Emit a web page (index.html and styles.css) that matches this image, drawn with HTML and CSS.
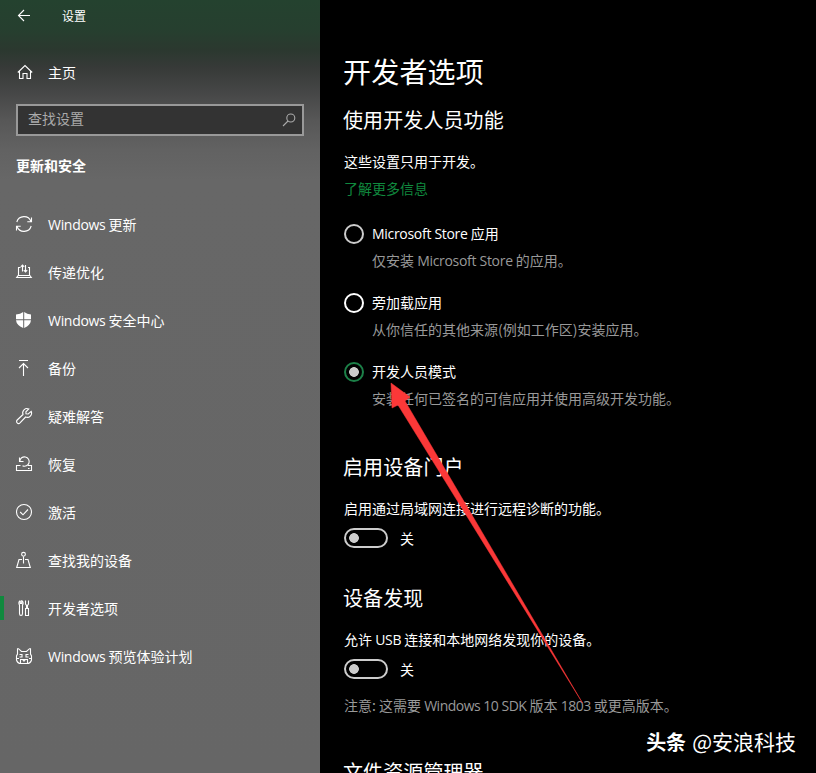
FILE: index.html
```html
<!DOCTYPE html>
<html lang="zh-CN">
<head>
    <meta charset="UTF-8">
    <meta name="viewport" content="width=device-width, initial-scale=1.0">
    <title>设置</title>
    <link rel="stylesheet" href="styles.css">
</head>
<body>
    <aside class="sidebar">
        <header class="titlebar">
            <svg class="icon" viewBox="0 0 16 16"><path d="M14 7.500H2.500M8 2 2.500 7.500 8 13"/></svg>
            <span>设置</span>
        </header>

        <a class="home">
            <svg class="icon" viewBox="0 0 16 16"><path d="M.8 8.500 8 1.500 15.200 8.500M2.500 7.500V14.500H6V9.500H10V14.500H13.500V7.500"/></svg>
            <span>主页</span>
        </a>

        <div class="search">
            <span>查找设置</span>
            <svg class="icon" viewBox="0 0 16 16"><circle cx="9.800" cy="6" r="4"/><path d="M7 9 2 14"/></svg>
        </div>

        <h2 class="group">更新和安全</h2>

        <nav class="nav">
            <a class="item">
                <svg class="icon" viewBox="0 0 16 16"><path d="M.8 6A7.500 7.500 0 0 1 15 5.500M15.500 1.500V5.700H11.300M15.200 10A7.500 7.500 0 0 1 1 10.500M.5 14.500V10.300H4.700"/></svg>
                <span><span class="latin">Windows</span> 更新</span>
            </a>
            <a class="item">
                <svg class="icon" viewBox="0 0 16 16"><path d="M4.500 3.500H2.500V11L.7 13.500H15.300L13.500 11V3.500H12M2.500 11.500H13.500M6.500 7.500V1M4.800 2.800 6.500 1 8.200 2.800M9.500 1V8M7.800 6.200 9.500 8 11.200 6.200"/></svg>
                <span>传递优化</span>
            </a>
            <a class="item">
                <svg class="icon" viewBox="0 0 16 16"><path class="solid" d="M7.200 0V7.200H0V2.500Q4.500 2.300 7.200 0M8.200 0Q11 2.300 15 2.500V7.200H8.200M0 8.200H7.200V16Q.5 13 0 8.200M8.200 8.200H15Q14.500 13 8.200 16"/></svg>
                <span><span class="latin">Windows</span> 安全中心</span>
            </a>
            <a class="item">
                <svg class="icon" viewBox="0 0 16 16"><path d="M3 .5H12M7.500 16V3.500M3 8 7.500 3.500 12 8"/></svg>
                <span>备份</span>
            </a>
            <a class="item">
                <svg class="icon" viewBox="0 0 16 16"><path d="M12.800 1A4.300 4.300 0 0 0 7 6.500L1.200 12A2 2 0 0 0 4 14.900L9.600 9A4.300 4.300 0 0 0 15.200 3.300L12.200 6 10 5.800 9.900 3.800Z"/></svg>
                <span>疑难解答</span>
            </a>
            <a class="item">
                <svg class="icon" viewBox="0 0 16 16"><path d="M4.500 9.500H.5V14.500H15.500V9.500H12M12 12.500H13.500M3.500 1.500V5.500H7.500M3.800 5.200A4.700 4.700 0 1 1 6.500 9.800"/></svg>
                <span>恢复</span>
            </a>
            <a class="item">
                <svg class="icon" viewBox="0 0 16 16"><circle cx="8" cy="8" r="7.500"/><path d="M4.200 8 7 10.800 12 5.500"/></svg>
                <span>激活</span>
            </a>
            <a class="item">
                <svg class="icon" viewBox="0 0 16 16"><circle cx="7.500" cy="2.300" r="1.900"/><path d="M7.500 4.500V11.500M6 7.500H3L.7 15.500H14.300L12 7.500H9"/></svg>
                <span>查找我的设备</span>
            </a>
            <a class="item active">
                <svg class="icon" viewBox="0 0 16 16"><path d="M4.300 .8V3.500H5.700V.8Q7.500 1.500 7 4L6.500 5V13.500Q6.500 15.500 5 15.500T3.500 13.500V5L3 4Q2.500 1.500 4.300 .8M9.500 .5V4L10.500 5.500V8.500H9.500V15.500H12.500V8.500H11.500V5.500L12.500 4V.5"/></svg>
                <span>开发者选项</span>
            </a>
            <a class="item">
                <svg class="icon" viewBox="0 0 16 16"><path d="M1.500 6V.7H2.500L5.500 3.500H10.500L13.500 .7H14.500V6L15.500 8V12Q14.500 15.500 11 15.500H5Q1.500 15.500 .5 12V8ZM0 10.500H3M13 10.500H16M3.500 6.500H6V9H3.500M12.500 6.500H10V9H12.500M4.500 15V11.500H11.500V15M6.500 11.500 8 13.200 9.500 11.500"/></svg>
                <span><span class="latin">Windows</span> 预览体验计划</span>
            </a>
        </nav>
    </aside>

    <main class="content">
        <h1>开发者选项</h1>

        <section>
            <h2 class="first">使用开发人员功能</h2>
            <p class="text">这些设置只用于开发。</p>
            <a class="link">了解更多信息</a>

            <div class="options">
                <div class="option">
                    <span class="radio"></span>
                    <div class="label">
                        <p><span class="latin">Microsoft Store</span> 应用</p>
                        <p class="hint">仅安装 <span class="latin">Microsoft Store</span> 的应用。</p>
                    </div>
                </div>
                <div class="option">
                    <span class="radio hover"></span>
                    <div class="label">
                        <p>旁加载应用</p>
                        <p class="hint">从你信任的其他来源(例如工作区)安装应用。</p>
                    </div>
                </div>
                <div class="option">
                    <span class="radio checked"></span>
                    <div class="label">
                        <p>开发人员模式</p>
                        <p class="hint">安装任何已签名的可信应用并使用高级开发功能。</p>
                    </div>
                </div>
            </div>
        </section>

        <section class="portal">
            <h2>启用设备门户</h2>
            <p class="text">启用通过局域网连接进行远程诊断的功能。</p>
            <div class="switch"><span class="toggle"></span><span>关</span></div>
        </section>

        <section class="discovery">
            <h2>设备发现</h2>
            <p class="text">允许 <span class="latin">USB</span> 连接和本地网络发现你的设备。</p>
            <div class="switch"><span class="toggle"></span><span>关</span></div>
            <p class="note">注意: 这需要 <span class="latin">Windows 10 SDK</span> 版本 <span class="latin">1803</span> 或更高版本。</p>
        </section>

        <section class="explorer">
            <h2>文件资源管理器</h2>
        </section>
    </main>

    <svg class="arrow" viewBox="0 0 816 773"><path d="M391 383 410 397 405 401 582.500 703 398 405 392 408Z"/></svg>
    <div class="watermark"><b>头条</b><span>@安浪科技</span></div>
</body>
</html>
```

FILE: styles.css
```css
* {
    box-sizing: border-box;
}
body {
    display: flex;
    width: 816px;
    height: 773px;
    margin: 0;
    overflow: hidden;
    position: relative;
    background: #000;
    color: #fff;
    font: 14px/20px "Noto Sans CJK SC", sans-serif;
}
h1, h2, p {
    margin: 0;
    font-weight: normal;
}
.latin {
    font-family: "Open Sans", "Noto Sans CJK SC", sans-serif;
    line-height: 1;
    letter-spacing: -0.3px;
}
.icon {
    width: 16px;
    height: 16px;
    flex: none;
    overflow: visible;
    fill: none;
    stroke: #fff;
    stroke-width: 1.1;
}
.icon .solid {
    fill: #fff;
    stroke: none;
}

/* sidebar */
.sidebar {
    width: 320px;
    height: 773px;
    flex: none;
    background: linear-gradient(#24422f 0, #263f2f 30px, #2b382f 50px, #373a38 68px, #444545 90px, #575757 120px, #626262 150px, #676767 180px, #666 100%);
}
.titlebar {
    display: flex;
    align-items: center;
    gap: 30px;
    height: 32px;
    padding-left: 16px;
    font-size: 12px;
}
.home {
    display: flex;
    align-items: center;
    gap: 15px;
    height: 48px;
    margin-top: 16px;
    padding-left: 17px;
}
.search {
    display: flex;
    align-items: center;
    justify-content: space-between;
    height: 32px;
    margin: 8px 16px 0;
    padding: 0 5px 4px 10px;
    border: 2px solid #999;
    background: #333;
    color: #aaa;
}
.search .icon {
    margin-top: 4px;
    stroke: #aaa;
}
.group {
    margin: 19px 0 0 16px;
    font-size: 14px;
    font-weight: bold;
}
.nav {
    margin-top: 25px;
}
.item {
    display: flex;
    align-items: center;
    gap: 16px;
    height: 48px;
    padding-left: 16px;
}
.item.active {
    background: linear-gradient(#10893e, #10893e) 0 50% / 4px 24px no-repeat;
}

/* page */
.content {
    flex: 1;
    padding: 53px 0 0 24px;
    white-space: nowrap;
}
h1 {
    margin-left: -1px;
    font-size: 28px;
    line-height: 36px;
    letter-spacing: 0.2px;
}
.content h2 {
    margin: 0 0 17px -1px;
    font-size: 20px;
    line-height: 28px;
    letter-spacing: 0.1px;
}
.content .first {
    margin-top: 17px;
}
.link {
    display: block;
    margin-top: 7px;
    color: #10893e;
}
.options {
    display: flex;
    flex-direction: column;
    gap: 23px;
    margin-top: 26px;
}
.option {
    display: flex;
    gap: 8px;
}
.label {
    margin-top: -1px;
}
.radio {
    width: 20px;
    height: 20px;
    border: 2px solid #ccc;
    border-radius: 50%;
}
.radio.hover {
    border-color: #fff;
}
.radio.checked {
    border-color: #1c8048;
    background: radial-gradient(circle, #ccc 4.500px, transparent 5.200px);
}
.hint, .note {
    color: #999;
}
.hint {
    margin-top: 7px;
}
.portal {
    margin-top: 45px;
}
.discovery {
    margin-top: 36px;
}
.explorer {
    margin-top: 43px;
}
.switch {
    display: flex;
    align-items: center;
    gap: 12px;
    height: 20px;
    margin-top: 10px;
}
.toggle {
    width: 44px;
    height: 20px;
    border: 2px solid #ccc;
    border-radius: 10px;
    background: radial-gradient(circle at 8px 8px, #ccc 4.500px, transparent 5.200px);
}
.note {
    margin-top: 16px;
}
.note .latin {
    letter-spacing: -0.5px;
}

/* overlays */
.arrow {
    position: absolute;
    top: 0;
    left: 0;
    width: 816px;
    height: 773px;
    fill: #fb3838;
    stroke: #fb3838;
    stroke-width: 0.5;
}
.watermark {
    display: flex;
    align-items: baseline;
    gap: 6px;
    position: absolute;
    right: 20px;
    bottom: 17px;
    font-size: 20px;
    line-height: 28px;
}
.watermark span {
    font-size: 21px;
}
```
